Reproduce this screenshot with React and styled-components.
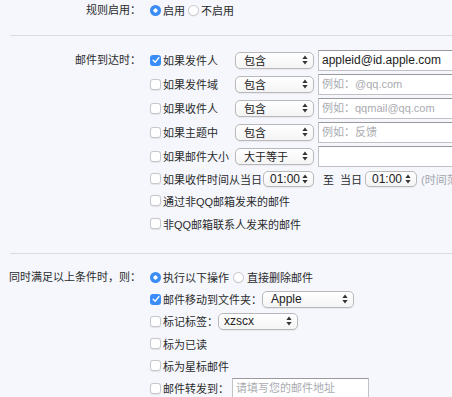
import React from "react";
import styled, { createGlobalStyle, css } from "styled-components";

const GlobalStyle = createGlobalStyle`
	body {
		margin: 0;
		background: #f5f7fd;
		font-family: "Liberation Sans", "Noto Sans CJK SC", sans-serif;
		font-size: 11px;
		color: #2b2b2b;
	}
`;

const Page = styled.div`
	width: 452px;
	height: 397px;
	overflow: hidden;
	white-space: nowrap;
`;

const Section = styled.div`
	display: flex;
	gap: 9px;
	margin-top: ${p => p.$top || 0}px;
`;

const Label = styled.div`
	width: 141px;
	flex: none;
	text-align: right;
	height: ${p => p.$h}px;
	line-height: ${p => p.$h}px;
`;

const Controls = styled.div`
	display: flex;
	flex-direction: column;
	gap: ${p => p.$gap || 0}px;
`;

const Row = styled.div`
	display: flex;
	align-items: center;
	height: ${p => p.$h}px;
`;

const Divider = styled.hr`
	border: 0;
	height: 1px;
	background: #d9dce4;
	margin: ${p => p.$top}px 0 0 10px;
`;

const Radio = styled.span`
	width: 11px;
	height: 11px;
	border-radius: 50%;
	box-sizing: border-box;
	flex: none;
	margin-right: 2px;
	${p => p.$on
		? css`background: radial-gradient(circle, #fff 0 1.8px, #3a8cf6 2.4px);`
		: css`background: #fff; border: 1px solid #c6c8cc; box-shadow: 0 0.5px 1px rgba(0,0,0,0.08);`}
`;

const Box = styled.span`
	width: 11px;
	height: 11px;
	border-radius: 3px;
	box-sizing: border-box;
	flex: none;
	margin-right: 2px;
	display: flex;
	align-items: center;
	justify-content: center;
	${p => p.$on
		? css`background: #3a8cf6;`
		: css`background: #fff; border: 1px solid #c6c8cc; box-shadow: 0 0.5px 1px rgba(0,0,0,0.08);`}
`;

const Text = styled.span`
	display: inline-block;
	width: ${p => (p.$w ? `${p.$w}px` : "auto")};
	margin-left: ${p => p.$ml || 0}px;
	color: ${p => (p.$muted ? "#a3a6ab" : "inherit")};
`;

const SelectBox = styled.div`
	display: flex;
	align-items: center;
	justify-content: space-between;
	box-sizing: border-box;
	width: ${p => p.$w}px;
	height: ${p => p.$h || 17}px;
	margin-left: ${p => p.$ml || 0}px;
	padding: 0 5px 0 ${p => p.$pl || 8}px;
	border: 1px solid #b9b9bc;
	border-radius: 5px;
	background: linear-gradient(#ffffff, #f4f4f4);
	box-shadow: 0 1px 1px rgba(0, 0, 0, 0.06);
	font-size: ${p => p.$fs || 11}px;
	color: #222;
`;

const Field = styled.input`
	box-sizing: border-box;
	width: ${p => p.$w}px;
	height: ${p => p.$h || 21}px;
	margin-left: ${p => p.$ml || 0}px;
	padding: 0 3px;
	border: 1px solid #c2c2c4;
	border-top-color: #9a9a9c;
	border-radius: 0;
	background: #fff;
	font-family: "Liberation Sans", "Noto Sans CJK SC", sans-serif;
	font-size: 12px;
	color: #222;
	outline: none;
	&::placeholder {
		color: #a9abb0;
		font-size: 11px;
	}
`;

const Arrows = () => (
	<svg width="6" height="10" viewBox="0 0 6 10">
		<path d="M3 0.5 L5.6 4 H0.4 Z" fill="#333" />
		<path d="M3 9.5 L5.6 6 H0.4 Z" fill="#333" />
	</svg>
);

const Select = ({ children, ...rest }) => (
	<SelectBox {...rest}>
		<span>{children}</span>
		<Arrows />
	</SelectBox>
);

const Check = ({ on }) => (
	<Box $on={on}>
		{on && (
			<svg width="8" height="8" viewBox="0 0 8 8">
				<path d="M1.2 4.3 L3.2 6.2 L6.9 1.6" stroke="#fff" strokeWidth="1.4" fill="none" strokeLinecap="round" strokeLinejoin="round" />
			</svg>
		)}
	</Box>
);

const conditions = [
	{ label: "如果发件人", on: true, value: "appleid@id.apple.com" },
	{ label: "如果发件域", placeholder: "例如：@qq.com" },
	{ label: "如果收件人", placeholder: "例如：qqmail@qq.com" },
	{ label: "如果主题中", placeholder: "例如：反馈" },
];

export default function App() {
	return (
		<Page>
			<GlobalStyle />

			<Section>
				<Label $h={20}>规则启用：</Label>
				<Row $h={20}>
					<Radio $on />
					<Text>启用</Text>
					<Radio as="span" style={{ marginLeft: 3 }} />
					<Text>不启用</Text>
				</Row>
			</Section>

			<Divider $top={15} />

			<Section $top={13}>
				<Label $h={22}>邮件到达时：</Label>
				<Controls $gap={2}>
					{conditions.map(c => (
						<Row $h={22} key={c.label}>
							<Check on={c.on} />
							<Text $w={72}>{c.label}</Text>
							<Select $w={79}>包含</Select>
							<Field $w={140} $ml={4} readOnly defaultValue={c.value} placeholder={c.placeholder} />
						</Row>
					))}
					<Row $h={22}>
						<Check />
						<Text $w={72}>如果邮件大小</Text>
						<Select $w={79}>大于等于</Select>
						<Field $w={140} $ml={4} readOnly />
					</Row>
					<Row $h={19}>
						<Check />
						<Text>如果收件时间从当日</Text>
						<Select $w={51} $h={16} $ml={1} $pl={6} $fs={12}>01:00</Select>
						<Text $ml={9}>至</Text>
						<Text $ml={6}>当日</Text>
						<Select $w={52} $h={16} $ml={3} $pl={6} $fs={12}>01:00</Select>
						<Text $ml={4} $muted>(时间范围)</Text>
					</Row>
					<Row $h={21}>
						<Check />
						<Text>通过非QQ邮箱发来的邮件</Text>
					</Row>
					<Row $h={21}>
						<Check />
						<Text>非QQ邮箱联系人发来的邮件</Text>
					</Row>
				</Controls>
			</Section>

			<Divider $top={19} />

			<Section $top={12}>
				<Label $h={22.2}>同时满足以上条件时，则：</Label>
				<Controls>
					<Row $h={22.2}>
						<Radio $on />
						<Text>执行以下操作</Text>
						<Radio style={{ marginLeft: 4 }} />
						<Text $ml={1}>直接删除邮件</Text>
					</Row>
					<Row $h={22.2}>
						<Check on />
						<Text>邮件移动到文件夹：</Text>
						<Select $w={92} $fs={12}>Apple</Select>
					</Row>
					<Row $h={22.2}>
						<Check />
						<Text>标记标签：</Text>
						<Select $w={80} $pl={5} $fs={12}>xzscx</Select>
					</Row>
					<Row $h={22.2}>
						<Check />
						<Text>标为已读</Text>
					</Row>
					<Row $h={22.2}>
						<Check />
						<Text>标为星标邮件</Text>
					</Row>
					<Row $h={22.2}>
						<Check />
						<Text>邮件转发到：</Text>
						<Field $w={137} $h={20} $ml={3} readOnly placeholder="请填写您的邮件地址" />
					</Row>
				</Controls>
			</Section>
		</Page>
	);
}
